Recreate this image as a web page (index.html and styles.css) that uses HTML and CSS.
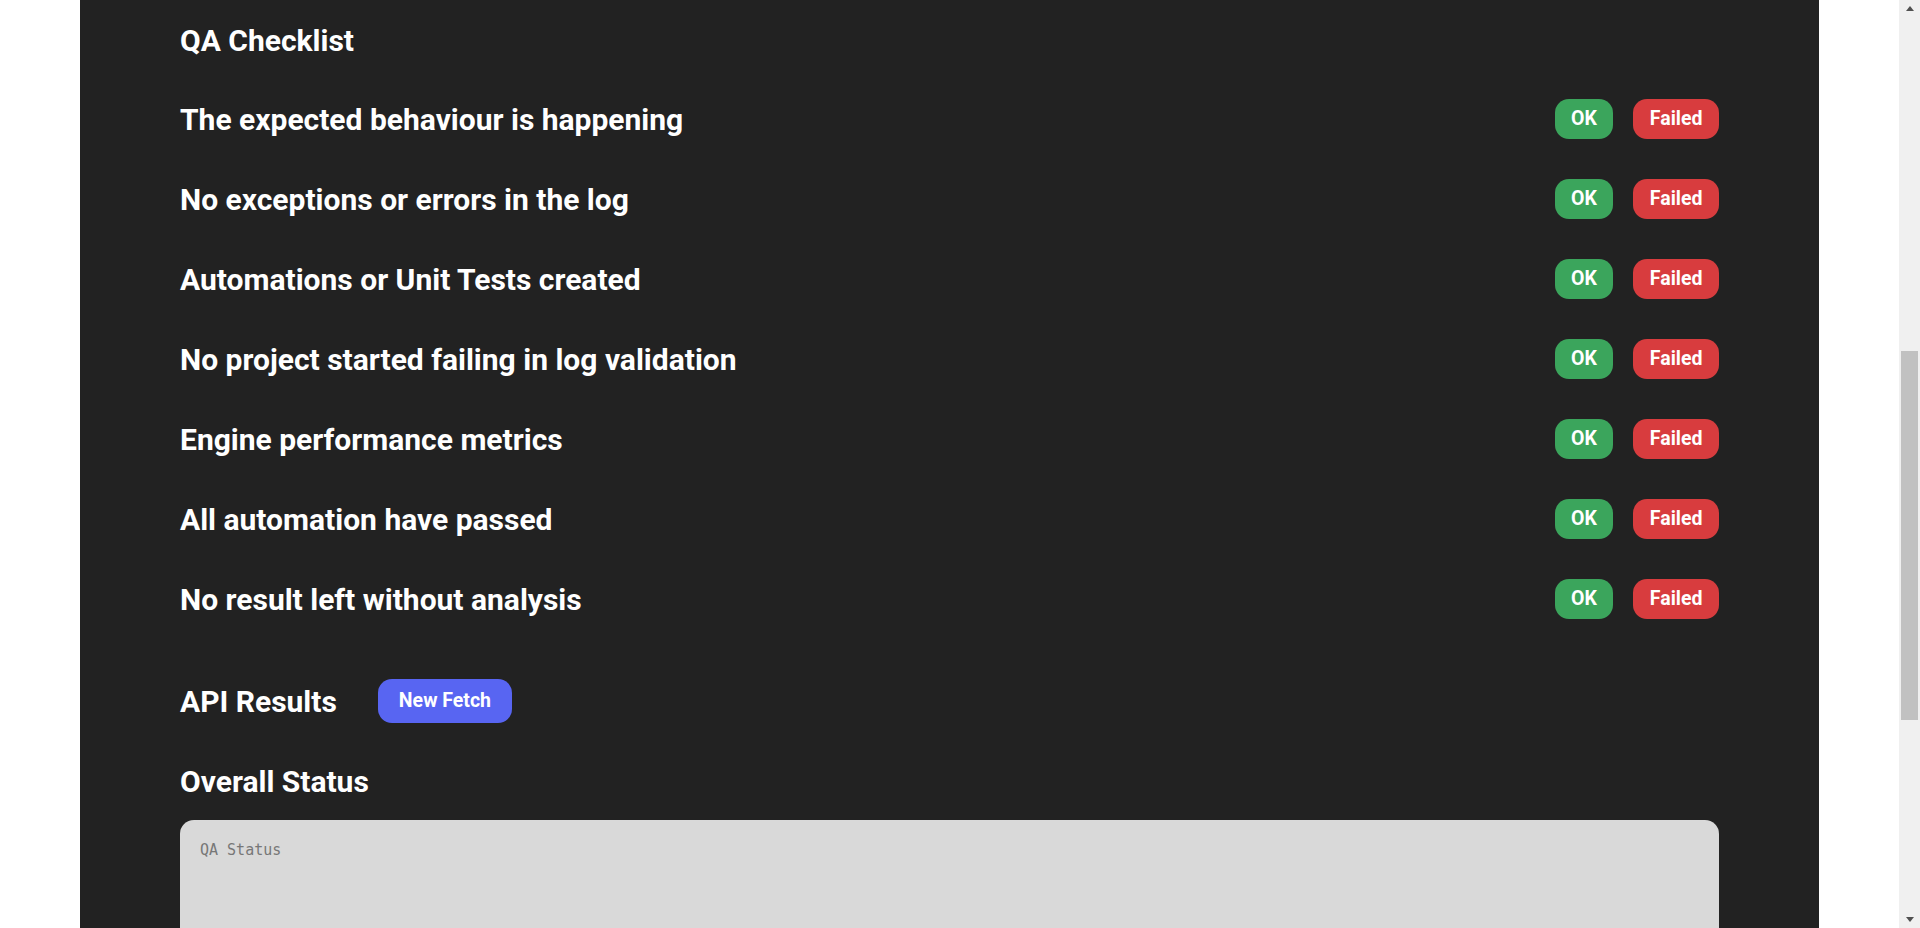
FILE: index.html
```html
<!DOCTYPE html>
<html lang="en">
<head>
<meta charset="utf-8">
<title>QA Checklist</title>
<link rel="stylesheet" href="styles.css">
</head>
<body class="window">
<div class="page">
<main class="panel">
  <h2 class="section-title checklist-title">QA Checklist</h2>
  <ul class="checklist">
    <li class="check-row"><span class="check-label">The expected behaviour is happening</span><div class="check-actions"><button class="btn btn-ok">OK</button><button class="btn btn-failed">Failed</button></div></li>
    <li class="check-row"><span class="check-label">No exceptions or errors in the log</span><div class="check-actions"><button class="btn btn-ok">OK</button><button class="btn btn-failed">Failed</button></div></li>
    <li class="check-row"><span class="check-label">Automations or Unit Tests created</span><div class="check-actions"><button class="btn btn-ok">OK</button><button class="btn btn-failed">Failed</button></div></li>
    <li class="check-row"><span class="check-label">No project started failing in log validation</span><div class="check-actions"><button class="btn btn-ok">OK</button><button class="btn btn-failed">Failed</button></div></li>
    <li class="check-row"><span class="check-label">Engine performance metrics</span><div class="check-actions"><button class="btn btn-ok">OK</button><button class="btn btn-failed">Failed</button></div></li>
    <li class="check-row"><span class="check-label">All automation have passed</span><div class="check-actions"><button class="btn btn-ok">OK</button><button class="btn btn-failed">Failed</button></div></li>
    <li class="check-row"><span class="check-label">No result left without analysis</span><div class="check-actions"><button class="btn btn-ok">OK</button><button class="btn btn-failed">Failed</button></div></li>
  </ul>
  <div class="api-header">
    <h2 class="section-title">API Results</h2>
    <button class="btn btn-fetch">New Fetch</button>
  </div>
  <h2 class="section-title overall-title">Overall Status</h2>
  <textarea class="status-box" placeholder="QA Status"></textarea>
</main>
</div>
<div class="scrollbar" aria-hidden="true">
  <span class="scroll-arrow scroll-up"></span>
  <div class="scroll-track"><div class="scroll-thumb"></div></div>
  <span class="scroll-arrow scroll-down"></span>
</div>
</body>
</html>
```
FILE: styles.css
```css
body {
  margin: 0;
  background: #ffffff;
  font-family: Roboto, "Liberation Sans", Arial, sans-serif;
}

.window {
  display: flex;
  height: 100vh;
  overflow: hidden;
}

.page {
  flex: 1;
  min-width: 0;
  overflow: hidden;
  background: #ffffff;
}

.scrollbar {
  flex: none;
  width: 21px;
  background: #f0f0f0;
  display: flex;
  flex-direction: column;
}

.scroll-arrow {
  flex: none;
  height: 17px;
  display: flex;
  align-items: center;
  justify-content: center;
}

.scroll-arrow::before {
  content: "";
  width: 0;
  height: 0;
  border-left: 4.5px solid transparent;
  border-right: 4.5px solid transparent;
}

.scroll-up::before {
  border-bottom: 5px solid #505050;
}

.scroll-down::before {
  border-top: 5px solid #505050;
}

.scroll-track {
  flex: 1;
  padding: 0 2px;
}

.scroll-thumb {
  margin-top: 334px;
  height: 369px;
  background: #c1c1c1;
}

.panel {
  margin: 0 80px;
  background: #222222;
  padding: 23px 100px 900px;
  color: #ffffff;
}

.section-title {
  margin: 0;
  font-size: 30px;
  line-height: 35px;
  font-weight: 700;
  color: #ffffff;
}

.checklist-title {
  margin-bottom: 21px;
}

.checklist {
  list-style: none;
  margin: 0;
  padding: 0;
}

.check-row {
  height: 80px;
  display: flex;
  align-items: center;
  justify-content: space-between;
}

.check-label {
  font-size: 30px;
  line-height: 35px;
  font-weight: 700;
}

.check-actions {
  display: flex;
  gap: 20px;
}

.btn {
  border: none;
  color: #ffffff;
  font-family: Roboto, "Liberation Sans", Arial, sans-serif;
  font-weight: 700;
  font-size: 19.5px;
  line-height: 24px;
  padding: 8px 16.5px;
  border-radius: 14px;
  cursor: pointer;
}

.btn-ok {
  background: #3ba55c;
}

.btn-failed {
  background: #d83c3e;
}

.api-header {
  margin-top: 40px;
  display: flex;
  align-items: center;
  gap: 41px;
}

.btn-fetch {
  background: #5865f2;
  padding: 10px 21px;
}

.overall-title {
  margin-top: 41px;
  margin-bottom: 21px;
}

.status-box {
  display: block;
  width: 100%;
  height: 320px;
  box-sizing: border-box;
  border: none;
  border-radius: 14px;
  background: #d9d9d9;
  padding: 21px 20px 20px;
  font-family: "DejaVu Sans Mono", "Liberation Mono", monospace;
  font-size: 15px;
  line-height: 18px;
  resize: none;
  outline: none;
}

.status-box::placeholder {
  color: #777777;
}
```
